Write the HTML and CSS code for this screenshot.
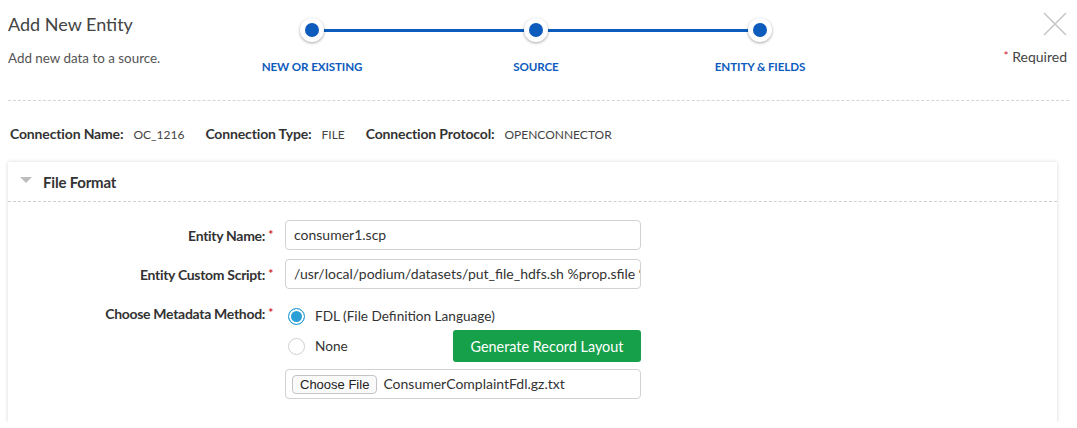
FILE: index.html
```html
<!DOCTYPE html>
<html>
<head>
<meta charset="utf-8">
<link rel="stylesheet" href="styles.css">
</head>
<body>
<div class="page">
  <header class="top">
    <div class="title-block">
      <h1 class="title">Add New Entity</h1>
      <p class="subtitle">Add new data to a source.</p>
    </div>
    <div class="stepper">
      <div class="step-line"></div>
      <div class="step"><span class="dot"></span><span class="step-label">NEW OR EXISTING</span></div>
      <div class="step"><span class="dot"></span><span class="step-label">SOURCE</span></div>
      <div class="step"><span class="dot"></span><span class="step-label">ENTITY &amp; FIELDS</span></div>
    </div>
    <div class="right-block">
      <svg class="close" width="24" height="24" viewBox="0 0 24 24"><path d="M1 1 L23 23 M23 1 L1 23" stroke="#c8c8c8" stroke-width="1.6" fill="none"/></svg>
      <div class="required"><span class="star">*</span> Required</div>
    </div>
  </header>
  <div class="divider"></div>
  <div class="conn-row">
    <span class="conn-key">Connection Name:</span><span class="conn-val">OC_1216</span>
    <span class="conn-key">Connection Type:</span><span class="conn-val">FILE</span>
    <span class="conn-key">Connection Protocol:</span><span class="conn-val">OPENCONNECTOR</span>
  </div>
  <section class="panel">
    <div class="panel-head">
      <span class="caret"></span>
      <span class="panel-title">File Format</span>
    </div>
    <div class="panel-body">
      <div class="form-row">
        <label class="form-label">Entity Name: <span class="star">*</span></label>
        <div class="field"><div class="input">consumer1.scp</div></div>
      </div>
      <div class="form-row">
        <label class="form-label">Entity Custom Script: <span class="star">*</span></label>
        <div class="field"><div class="input clip">/usr/local/podium/datasets/put_file_hdfs.sh %prop.sfile %prop.tfile</div></div>
      </div>
      <div class="form-row method">
        <label class="form-label">Choose Metadata Method: <span class="star">*</span></label>
        <div class="field method-field">
          <div class="radio-line"><span class="radio checked"></span><span class="radio-text">FDL (File Definition Language)</span></div>
          <div class="radio-line second"><span class="radio"></span><span class="radio-text">None</span><button class="gen-btn">Generate Record Layout</button></div>
          <div class="input file-input"><span class="choose-btn">Choose File</span><span class="file-name">ConsumerComplaintFdl.gz.txt</span></div>
        </div>
      </div>
    </div>
  </section>
</div>
</body>
</html>
```
FILE: styles.css
```css
* { box-sizing: border-box; }
html, body { margin: 0; padding: 0; background: #fff; }
body { font-family: "Lato", "Liberation Sans", sans-serif; color: #333; }
.page { padding: 0 8px 0 8px; width: 1077px; }

.top { display: flex; height: 100px; }
.title-block { width: 192px; }
.title { margin: 13px 0 0 0; font-size: 18px; font-weight: 400; color: #444; line-height: 22px; }
.subtitle { margin: 14px 0 0 0; font-size: 13.4px; color: #555; line-height: 18px; }

.stepper { position: relative; display: flex; width: 672px; margin-top: 18px; height: 62px; }
.step-line { position: absolute; left: 112px; right: 112px; top: 11px; height: 3px; background: #0c5bbd; }
.step { position: relative; width: 224px; display: flex; flex-direction: column; align-items: center; }
.dot { width: 24px; height: 24px; border-radius: 50%; background: #0c5bbd; border: 5px solid #fff; box-shadow: 0 1px 3px rgba(0,0,0,0.35); }
.step-label { margin-top: 18px; font-size: 11.6px; font-weight: 700; color: #0c5bbd; letter-spacing: -0.1px; }

.right-block { flex: 1; display: flex; flex-direction: column; align-items: flex-end; padding-right: 2px; }
.close { margin-top: 12px; }
.required { margin-top: 12px; font-size: 14px; color: #444; }
.star { color: #d0232a; font-size: 12px; vertical-align: 2px; }

.divider { border-top: 1px dashed #d6d6d6; margin: 0 0 0 0; width: 1061px; }

.conn-row { display: flex; align-items: baseline; height: 60px; padding: 24px 0 0 2px; }
.conn-key { font-size: 14px; font-weight: 700; color: #333; margin-right: 10px; letter-spacing: -0.15px; }
.conn-val { font-size: 12px; color: #444; margin-right: 21px; }

.panel { width: 1049px; background: #fff; box-shadow: 0 0 4px rgba(0,0,0,0.16); margin-top: 1px; }
.panel-head { display: flex; align-items: center; height: 40px; border-bottom: 1px dashed #cfcfcf; padding-left: 12px; }
.caret { width: 0; height: 0; border-left: 6px solid transparent; border-right: 6px solid transparent; border-top: 6px solid #bdbdbd; margin-top: -4px; }
.panel-title { margin-left: 11px; font-size: 15px; font-weight: 700; color: #333; letter-spacing: -0.2px; }

.panel-body { padding: 18px 0 23px 0; }
.form-row { display: flex; margin-bottom: 8px; }
.form-row:last-child { margin-bottom: 0; }
.form-label { width: 265px; text-align: right; font-size: 14px; font-weight: 700; color: #333; line-height: 30px; letter-spacing: -0.3px; }
.field { margin-left: 12px; width: 356px; }
.input { height: 30px; border: 1px solid #d2d2d2; border-radius: 4px; font-size: 14px; line-height: 28px; padding-left: 8px; color: #333; white-space: nowrap; overflow: hidden; }
.method { margin-top: 13px; }
.method .form-label { line-height: 20px; }
.radio-line { display: flex; align-items: center; height: 30px; margin-top: -2px; }
.radio-line.second { margin-top: 0; }
.radio { width: 17px; height: 17px; border-radius: 50%; border: 1.5px solid #cfcfcf; margin-left: 3px; margin-right: 10px; background: #fff; }
.radio.checked { border: 1.5px solid #2c9fd6; background: #2c9fd6; box-shadow: inset 0 0 0 2px #fff; }
.radio-text { font-size: 13.6px; color: #333; }
.gen-btn { margin-left: auto; width: 188px; height: 32px; background: #16a04a; color: #fff; border: none; border-radius: 3px; font-family: inherit; font-size: 14.4px; padding: 0; margin-right: 0; }
.file-input { margin-top: 8px; display: flex; align-items: center; padding-left: 6px; }
.choose-btn { font-size: 13px; font-family: "Liberation Sans", sans-serif; color: #222; border: 1px solid #c4c4c4; border-radius: 4px; height: 19px; line-height: 17px; padding: 0 7px; background: #fafafa; }
.file-name { margin-left: 6px; font-size: 14px; color: #333; }
```
